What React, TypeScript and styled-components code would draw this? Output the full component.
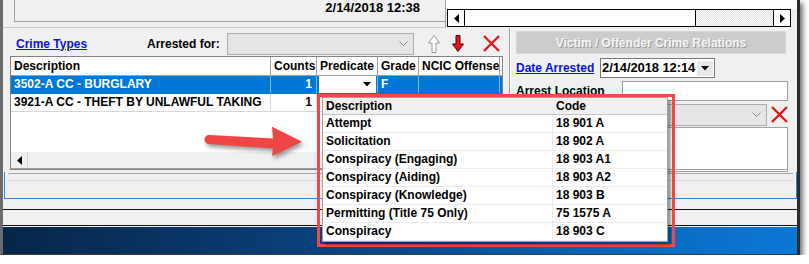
import React from "react";
import styled, { createGlobalStyle } from "styled-components";

const GlobalStyle = createGlobalStyle`
  html, body {
    margin: 0;
    padding: 0;
    background: #fff;
  }
  body {
    font-family: "Liberation Sans", Arial, sans-serif;
    font-size: 12px;
    font-weight: bold;
    color: #000;
  }
  * {
    box-sizing: border-box;
  }
`;

// 데이터
const gridColumns = "260px 46px 61px 41px 81px";

const predicateOptions = [
  { description: "Attempt", code: "18 901 A" },
  { description: "Solicitation", code: "18 902 A" },
  { description: "Conspiracy (Engaging)", code: "18 903 A1" },
  { description: "Conspiracy (Aiding)", code: "18 903 A2" },
  { description: "Conspiracy (Knowledge)", code: "18 903 B" },
  { description: "Permitting (Title 75 Only)", code: "75 1575 A" },
  { description: "Conspiracy", code: "18 903 C" },
];

const Window = styled.div`
  position: relative;
  width: 800px;
  background: #f0f0f0;
  border-left: 3px solid #6b6b6b;
  border-right: 3px solid #2b2b2b;
  border-bottom: 1px solid #3a3a3a;
  box-shadow: 3px 3px 5px rgba(0, 0, 0, 0.55);
  display: flex;
  flex-direction: column;
`;

/* ---------- top strip ---------- */
const TopStrip = styled.div`
  display: flex;
  height: 28px;
`;

const TopLeft = styled.div`
  width: 443px;
  padding-left: 11px;
  border-right: 1px solid #a0a0a0;
  border-bottom: 1px solid #c8c8c8;
`;

const DateBox = styled.div`
  height: 22px;
  border-left: 1px solid #a0a0a0;
  border-bottom: 1px solid #a0a0a0;
  display: flex;
  justify-content: flex-end;
  padding-right: 25px;
  font-size: 13px;
  line-height: 15px;
`;

const TopRight = styled.div`
  flex: 1;
  padding: 9px 6px 0 1px;
  background: linear-gradient(#fff 0 9px, #f0f0f0 9px);
`;

const ScrollBar = styled.div`
  display: flex;
  height: 18px;
  border: 1px solid #000;
  background: #fff;
`;

const ScrollButton = styled.div<{ side: "left" | "right" }>`
  width: 17px;
  display: flex;
  align-items: center;
  justify-content: center;
  background: #fff;
  ${({ side }) => (side === "left" ? "border-right: 1px solid #000;" : "border-left: 1px solid #000;")}
`;

const ScrollThumb = styled.div`
  width: 231px;
  border-right: 1px solid #000;
  background: #fff;
`;

const ScrollTrack = styled.div`
  flex: 1;
  background: repeating-conic-gradient(#dcdcdc 0 25%, #fff 0 50%) 0 0 / 2px 2px;
`;

/* ---------- body ---------- */
const Body = styled.div`
  display: flex;
  height: 144px;
`;

const LeftPane = styled.div`
  width: 506px;
  padding-left: 7px;
  display: flex;
  flex-direction: column;
`;

const Toolbar = styled.div`
  height: 28px;
  padding: 3px 0 0 6px;
  display: flex;
  align-items: center;
`;

const LinkLabel = styled.span<{ width: number }>`
  width: ${({ width }) => width}px;
  color: #0a14e0;
  text-decoration: underline;
  white-space: nowrap;
`;

const Label = styled.span<{ width: number }>`
  width: ${({ width }) => width}px;
  white-space: nowrap;
  overflow: hidden;
`;

const DisabledCombo = styled.div<{ width?: number }>`
  ${({ width }) => (width ? `width: ${width}px;` : "flex: 1;")}
  height: 100%;
  max-height: 22px;
  background: #e5e5e5;
  border: 1px solid #adadad;
  display: flex;
  align-items: center;
  justify-content: flex-end;
  padding-right: 5px;
`;

const ToolIcon = styled.span<{ gap: number }>`
  margin-left: ${({ gap }) => gap}px;
  display: flex;
  align-items: center;
`;

const Grid = styled.div`
  width: 493px;
  height: 114px;
  border: 1px solid #828282;
  background: #fff;
  display: flex;
  flex-direction: column;
`;

const GridRow = styled.div<{ selected?: boolean; header?: boolean }>`
  display: grid;
  grid-template-columns: ${gridColumns};
  height: ${({ header }) => (header ? 19 : 18)}px;
  background: ${({ selected }) => (selected ? "#0078d7" : "#fff")};
  color: ${({ selected }) => (selected ? "#fff" : "#000")};
  border-bottom: 1px solid ${({ header, selected }) => (header ? "#a0a0a0" : selected ? "#0078d7" : "#d8d8d8")};
`;

const GridCell = styled.div<{ align?: "left" | "right"; header?: boolean; selected?: boolean }>`
  padding: 0 ${({ align }) => (align === "right" ? 4 : 0)}px 0 3px;
  text-align: ${({ align }) => align || "left"};
  line-height: ${({ header }) => (header ? 18 : 17)}px;
  white-space: nowrap;
  overflow: hidden;
  border-right: 1px solid ${({ header, selected }) => (header ? "#a0a0a0" : selected ? "#7fb3e3" : "#d8d8d8")};
`;

const PredicateCombo = styled.div`
  margin: 0 1px 0 -1px;
  height: 17px;
  background: #fff;
  display: flex;
  justify-content: flex-end;
  align-items: center;
  padding-right: 2px;
`;

const ComboButton = styled.div<{ width: number }>`
  width: ${({ width }) => width}px;
  height: 100%;
  display: flex;
  align-items: center;
  justify-content: center;
  background: #fff;
`;

const GridSpacer = styled.div`
  flex: 1;
`;

const GridScroll = styled.div`
  height: 17px;
  display: flex;
  background: #f0f0f0;
  border-bottom: 1px solid #a0a0a0;
`;

const GridScrollButton = styled.div`
  width: 17px;
  display: flex;
  align-items: center;
  justify-content: center;
  border-right: 1px solid #d6d6d6;
`;

const RightPane = styled.div`
  flex: 1;
  border-left: 1px solid #a0a0a0;
  box-shadow: inset 1px 0 #fff;
  padding: 3px 9px 0 6px;
  display: flex;
  flex-direction: column;
`;

const DisabledButton = styled.div`
  width: 270px;
  height: 23px;
  background: #cccccc;
  border: 1px solid #d8d8d8;
  display: flex;
  align-items: center;
  justify-content: center;
  color: #f6f6f6;
  text-shadow: 1px 1px 0 #9a9a9a;
`;

const FieldRow = styled.div<{ top: number; height: number }>`
  margin-top: ${({ top }) => top}px;
  height: ${({ height }) => height}px;
  display: flex;
  align-items: center;
`;

const DatePicker = styled.div`
  width: 115px;
  height: 20px;
  border: 1px solid #7a7a7a;
  background: #fff;
  display: flex;
  font-size: 13px;
`;

const DateText = styled.span`
  flex: 1;
  padding-left: 1px;
  line-height: 18px;
  letter-spacing: -0.1px;
  white-space: nowrap;
`;

const DateButton = styled.div`
  width: 16px;
  margin: 2px 1px 1px 0;
  background: #e8e8e8;
  display: flex;
  align-items: center;
  justify-content: center;
`;

const TextInput = styled.div`
  flex: 1;
  height: 20px;
  border: 1px solid #a0a0a0;
  background: #fff;
`;

const ListBox = styled.div`
  margin-top: 1px;
  height: 45px;
  border: 1px solid #a0a0a0;
  border-bottom: 3px double #a0a0a0;
  background: #fff;
`;

/* ---------- bottom ---------- */
const FocusStrip = styled.div`
  height: 27px;
  margin-left: 1px;
  border: 1px solid #2b86d8;
  border-top: none;
  padding: 1px 3px 0 3px;
`;

const FocusLines = styled.div`
  height: 8px;
  border-top: 1px solid #a8a8a8;
  border-bottom: 1px solid #d6d6d6;
`;

const Gap = styled.div<{ height: number }>`
  height: ${({ height }) => height}px;
`;

const StatusBand = styled.div`
  height: 17px;
  border-top: 1px solid #111;
  border-bottom: 1px solid #111;
`;

const Taskbar = styled.div`
  height: 27px;
  background: linear-gradient(90deg, #072649 0%, #0a3a6e 30%, #0a4f95 55%, #0a68bd 78%, #0b78d6 100%);
`;

/* ---------- callout ---------- */
const Callout = styled.div`
  position: absolute;
  left: 314px;
  top: 94px;
  width: 358px;
  height: 153px;
  border: 3px solid #f24848;
  padding-left: 2px;
`;

const Popup = styled.div`
  width: 346px;
  border: 1px solid #a0a0a0;
  background: #fff;
  box-shadow: 3px 3px 2px rgba(0, 0, 0, 0.35);
`;

const PopupRow = styled.div<{ header?: boolean }>`
  display: grid;
  grid-template-columns: 229px 1fr;
  height: ${({ header }) => (header ? 17 : 18)}px;
  background: ${({ header }) => (header ? "#f0f0f0" : "#fff")};
  border-bottom: 1px solid ${({ header }) => (header ? "#c8c8c8" : "#ececec")};
`;

const PopupCell = styled.div<{ header?: boolean }>`
  padding-left: 3px;
  line-height: ${({ header }) => (header ? 16 : 17)}px;
  white-space: nowrap;
  & + & {
    border-left: 1px solid ${({ header }) => (header ? "#a0a0a0" : "#ececec")};
  }
`;

const ArrowSvg = styled.svg`
  position: absolute;
  left: 197px;
  top: 120px;
  overflow: visible;
  filter: drop-shadow(2px 3px 2px rgba(0, 0, 0, 0.4));
`;

const TriLeft = () => (
  <svg width="5" height="9" viewBox="0 0 5 9">
    <path d="M5 0 L0 4.5 L5 9 Z" fill="#000" />
  </svg>
);

const TriRight = () => (
  <svg width="5" height="9" viewBox="0 0 5 9">
    <path d="M0 0 L5 4.5 L0 9 Z" fill="#000" />
  </svg>
);

const TriDown = () => (
  <svg width="8" height="5" viewBox="0 0 8 5">
    <path d="M0 0 H8 L4 4.5 Z" fill="#000" />
  </svg>
);

const Chevron = () => (
  <svg width="9" height="5" viewBox="0 0 9 5">
    <path d="M0.5 0.5 L4.5 4.5 L8.5 0.5" fill="none" stroke="#8a8a8a" strokeWidth="1" />
  </svg>
);

const UpArrowIcon = () => (
  <svg width="12" height="18" viewBox="0 0 12 18">
    <path d="M6 0.5 L11.5 8 H8 V17.5 H4 V8 H0.5 Z" fill="#fff" stroke="#9a9a9a" strokeWidth="1" />
  </svg>
);

const DownArrowIcon = () => (
  <svg width="12" height="17" viewBox="0 0 12 17">
    <path d="M4 0.5 H8 V9 H11.5 L6 16.5 L0.5 9 H4 Z" fill="#e8141b" stroke="#4a0000" strokeWidth="1" />
  </svg>
);

const RedXIcon = () => (
  <svg width="17" height="17" viewBox="0 0 17 17">
    <path d="M1 1 L16 16 M16 1 L1 16" stroke="#e01a1a" strokeWidth="2.4" />
  </svg>
);

const App: React.FC = () => {
  return (
    <>
      <GlobalStyle />
      <Window>
        <TopStrip>
          <TopLeft>
            <DateBox>2/14/2018 12:38</DateBox>
          </TopLeft>
          <TopRight>
            <ScrollBar>
              <ScrollButton side="left">
                <TriLeft />
              </ScrollButton>
              <ScrollThumb />
              <ScrollTrack />
              <ScrollButton side="right">
                <TriRight />
              </ScrollButton>
            </ScrollBar>
          </TopRight>
        </TopStrip>

        <Body>
          <LeftPane>
            <Toolbar>
              <LinkLabel width={131}>Crime Types</LinkLabel>
              <Label width={80}>Arrested for:</Label>
              <DisabledCombo width={187}>
                <Chevron />
              </DisabledCombo>
              <ToolIcon gap={14}>
                <UpArrowIcon />
              </ToolIcon>
              <ToolIcon gap={12}>
                <DownArrowIcon />
              </ToolIcon>
              <ToolIcon gap={19}>
                <RedXIcon />
              </ToolIcon>
            </Toolbar>

            <Grid>
              <GridRow header>
                <GridCell header>Description</GridCell>
                <GridCell header>Counts</GridCell>
                <GridCell header>Predicate</GridCell>
                <GridCell header>Grade</GridCell>
                <GridCell header>NCIC Offense</GridCell>
              </GridRow>
              <GridRow selected>
                <GridCell selected>3502-A CC - BURGLARY</GridCell>
                <GridCell selected align="right">
                  1
                </GridCell>
                <GridCell selected>
                  <PredicateCombo>
                    <ComboButton width={15}>
                      <TriDown />
                    </ComboButton>
                  </PredicateCombo>
                </GridCell>
                <GridCell selected>F</GridCell>
                <GridCell selected />
              </GridRow>
              <GridRow>
                <GridCell>3921-A CC - THEFT BY UNLAWFUL TAKING</GridCell>
                <GridCell align="right">1</GridCell>
                <GridCell />
                <GridCell />
                <GridCell />
              </GridRow>
              <GridSpacer />
              <GridScroll>
                <GridScrollButton>
                  <TriLeft />
                </GridScrollButton>
              </GridScroll>
            </Grid>
          </LeftPane>

          <RightPane>
            <DisabledButton>Victim / Offender Crime Relations</DisabledButton>
            <FieldRow top={4} height={20}>
              <LinkLabel width={84}>Date Arrested</LinkLabel>
              <DatePicker>
                <DateText>2/14/2018 12:14</DateText>
                <DateButton>
                  <TriDown />
                </DateButton>
              </DatePicker>
            </FieldRow>
            <FieldRow top={3} height={20}>
              <Label width={106}>Arrest Location</Label>
              <TextInput />
            </FieldRow>
            <FieldRow top={2} height={23}>
              <Label width={106} />
              <DisabledCombo>
                <Chevron />
              </DisabledCombo>
              <ToolIcon gap={4}>
                <RedXIcon />
              </ToolIcon>
            </FieldRow>
            <ListBox />
          </RightPane>
        </Body>

        <FocusStrip>
          <FocusLines />
        </FocusStrip>
        <Gap height={10} />
        <StatusBand />
        <Gap height={1} />
        <Taskbar />

        <ArrowSvg width="110" height="45" viewBox="0 0 110 45">
          <path
            d="M9 15 L73 18.5 L72 6.7 L102 21.7 L72 36 L73 28.5 L9 24 A4.5 4.5 0 0 1 9 15 Z"
            fill="#f04545"
          />
        </ArrowSvg>

        <Callout>
          <Popup>
            <PopupRow header>
              <PopupCell header>Description</PopupCell>
              <PopupCell header>Code</PopupCell>
            </PopupRow>
            {predicateOptions.map((item, index) => (
              <PopupRow key={index}>
                <PopupCell>{item.description}</PopupCell>
                <PopupCell>{item.code}</PopupCell>
              </PopupRow>
            ))}
          </Popup>
        </Callout>
      </Window>
    </>
  );
};

export default App;
